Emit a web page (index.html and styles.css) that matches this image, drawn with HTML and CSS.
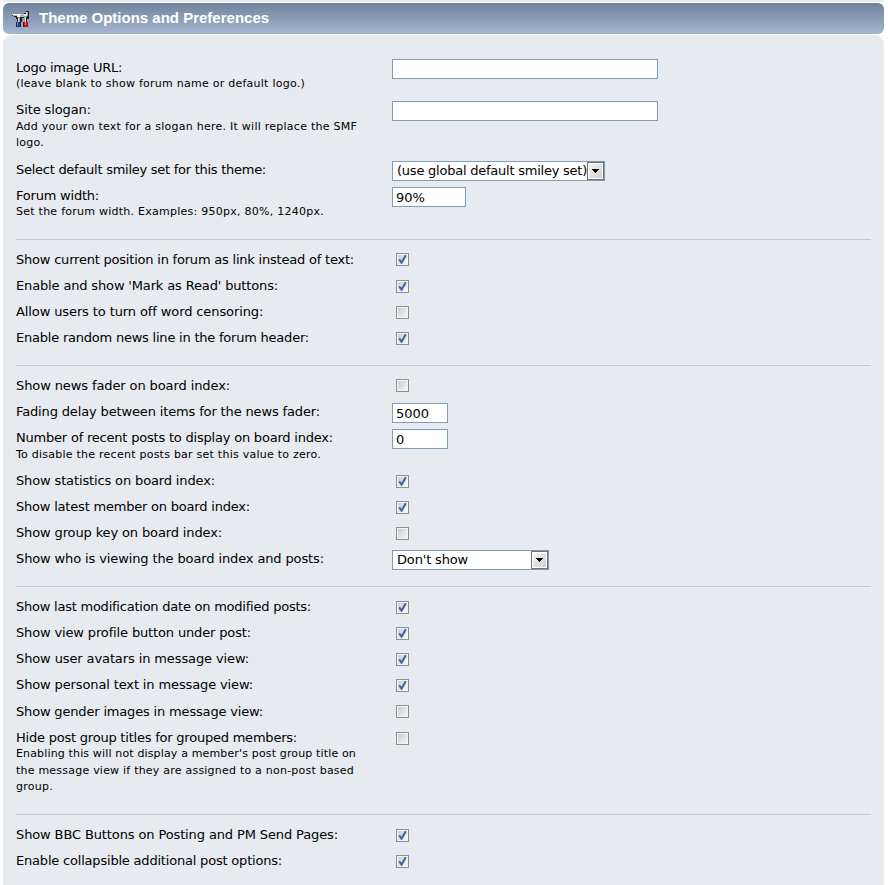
FILE: index.html
```
<!DOCTYPE html>
<html lang="en">
<head>
<meta charset="utf-8">
<title>Theme Options and Preferences</title>
<link rel="stylesheet" href="styles.css">
</head>
<body>
<div class="previous"></div>
<h3 class="titlebar">
<svg class="tools" width="18" height="18" viewBox="0 0 18 18" shape-rendering="crispEdges">
<path fill="#222" d="M0 4h12V3h2V1h3v8h-2v3h1v5h-5v-5h1V8h-2v4h-1v5H4v-5h1V9H4V7H2V6H0z"/>
<path fill="#bbb" d="M1 4h11v3H5V6H1z"/><path fill="#f4f4f4" d="M0 4h9v1H0zM5 5h3v2H5z"/>
<path fill="#999" d="M6 7h2v5H6zM12 5h3v2h-2v5h-1zM14 2h2v4h-2z"/>
<path fill="#e6e6e6" d="M6 8h1v4H6zM12 4h2v2h-2zM13 7h1v5h-1zM14 2h1v4h-1z"/>
<path fill="#123fa8" d="M5 12h3v5H5z"/><path fill="#5e91ed" d="M5 12h1v4H5z"/>
<path fill="#d80815" d="M12 12h4v5h-4z"/><path fill="#ff7777" d="M13 12h1v3h-1z"/>
</svg>
<span>Theme Options and Preferences</span>
</h3>
<form class="panel" id="form"></form>
<script src="script.js"></script>
</body>
</html>
```
FILE: styles.css
```
body { margin: 0; width: 888px; height: 885px; overflow: hidden; background: #fff; color: #000; font: 13px/16.4px Verdana, "DejaVu Sans", sans-serif; }
.previous { height: 2px; margin: 0 4px 1px 3px; background: #e7eaef; border-radius: 0 0 5px 5px; }
.titlebar { box-sizing: border-box; display: flex; align-items: center; gap: 9px; height: 31px; margin: 0 4px 1px 3px; padding: 0 9px; border-radius: 6px; background: linear-gradient(#71839b, #a5b7d0); color: #fff; font: bold 15px/30px Arial, "Liberation Sans", sans-serif; }
.titlebar span { height: 31px; }
.tools { flex: none; }
.panel { box-sizing: border-box; height: 870px; margin: 0 4px 0 3px; padding: 24.7px 13px 0; border-radius: 9px; background: #e7eaef; }
.row { display: grid; grid-template-columns: 376px 1fr; padding-bottom: 9.8px; }
.label { width: 356px; }
.name, .note span { display: block; width: max-content; white-space: nowrap; }
.note { display: block; font-size: 11px; line-height: 16.5px; }
.control { height: 16px; }
.rule { height: 1px; margin: 8.8px 0 11.4px; background: #c8c9cb; }
.text { box-sizing: border-box; display: block; width: 74px; height: 20px; margin: -1.1px 0 0; padding: 1px 4px 0 3px; border: 1px solid #7f9db9; border-radius: 0; background: #fff; color: #000; font: inherit; }
.wide { width: 266px; }
.number { width: 56px; }
.select { box-sizing: border-box; display: flex; justify-content: space-between; height: 20px; margin-top: -1.1px; border: 1px solid #7f9db9; background: #fff; white-space: nowrap; line-height: 17px; padding-left: 4px; }
.smiley { width: 213px; }
.viewing { width: 157px; }
.arrow { box-sizing: border-box; flex: none; display: flex; align-items: center; justify-content: center; width: 17px; height: 18px; border: 1px solid #707070; background: linear-gradient(135deg, #f8f8f8, #ccc); box-shadow: inset 0 0 0 1px #fff; }
.check { display: block; margin: 1.8px 0 0 4px; }
```
FILE: script.js
```
const groups = [
  [
    ['Logo image URL:', 106, 'wide', '', [['(leave blank to show forum name or default logo.)', 289]]],
    ['Site slogan:', 75, 'wide', '', [['Add your own text for a slogan here. It will replace the SMF', 341], ['logo.', 28]]],
    ['Select default smiley set for this theme:', 250, 'smiley', '(use global default smiley set)'],
    ['Forum width:', 83, 'width', '90%', [['Set the forum width. Examples: 950px, 80%, 1240px.', 308]]]
  ],
  [
    ['Show current position in forum as link instead of text:', 338, 'check', true],
    ["Enable and show 'Mark as Read' buttons:", 262, 'check', true],
    ['Allow users to turn off word censoring:', 247, 'check', false],
    ['Enable random news line in the forum header:', 293, 'check', true]
  ],
  [
    ['Show news fader on board index:', 214, 'check', false],
    ['Fading delay between items for the news fader:', 304, 'number', '5000'],
    ['Number of recent posts to display on board index:', 317, 'number', '0', [['To disable the recent posts bar set this value to zero.', 305]]],
    ['Show statistics on board index:', 199, 'check', true],
    ['Show latest member on board index:', 234, 'check', true],
    ['Show group key on board index:', 206, 'check', false],
    ['Show who is viewing the board index and posts:', 308, 'viewing', "Don't show"]
  ],
  [
    ['Show last modification date on modified posts:', 295, 'check', true],
    ['Show view profile button under post:', 235, 'check', true],
    ['Show user avatars in message view:', 233, 'check', true],
    ['Show personal text in message view:', 237, 'check', true],
    ['Show gender images in message view:', 247, 'check', false],
    ['Hide post group titles for grouped members:', 281, 'check', false, [['Enabling this will not display a member\'s post group title on', 340], ['the message view if they are assigned to a non-post based', 338], ['group.', 37]]]
  ],
  [
    ['Show BBC Buttons on Posting and PM Send Pages:', 322, 'check', true],
    ['Enable collapsible additional post options:', 266, 'check', true]
  ]
];

function fit(el, width) {
  el.style.letterSpacing = (width - el.getBoundingClientRect().width) / el.textContent.length + 'px';
}

function add(parent, tag, cls, text) {
  const el = document.createElement(tag);
  el.className = cls;
  if (text) el.textContent = text;
  parent.append(el);
  return el;
}

function checkbox(on) {
  return `<svg class="check" width="13" height="13" viewBox="0 0 13 13">
<defs><linearGradient id="face" x1="0" y1="0" x2="1" y2="1"><stop stop-color="#c9cdd4"/><stop offset="1" stop-color="#f6f6f6"/></linearGradient></defs>
<path fill="#8e8f8f" d="M0 0h13v13H0z"/><path fill="#f4f4f4" d="M1 1h11v11H1z"/><path fill="url(#face)" d="M2 2h9v9H2z"/>
${on ? '<path fill="none" stroke="#4561a5" stroke-width="2" d="M3.2 6.3L5.6 9.6L9.8 2.3"/>' : ''}</svg>`;
}

const form = document.getElementById('form');
groups.forEach((rows, i) => {
  if (i) add(form, 'div', 'rule');
  rows.forEach(([name, width, kind, value, notes]) => {
    const row = add(form, 'div', 'row');
    const label = add(row, 'div', 'label');
    fit(add(label, 'span', 'name', name), width);
    if (notes) {
      const note = add(label, 'span', 'note');
      notes.forEach(([text, w]) => fit(add(note, 'span', '', text), w));
    }
    const control = add(row, 'div', 'control');
    if (kind === 'check') {
      control.innerHTML = checkbox(value);
    } else if (kind === 'smiley' || kind === 'viewing') {
      const select = add(control, 'div', 'select ' + kind);
      const text = add(select, 'span', '', value);
      fit(text, kind === 'smiley' ? 190 : 71);
      add(select, 'span', 'arrow').innerHTML = '<svg width="7" height="4" viewBox="0 0 7 4" shape-rendering="crispEdges"><path d="M0 0h7v1H6v1H5v1H4v1H3V3H2V2H1V1H0z"/></svg>';
    } else {
      add(control, 'input', 'text ' + kind).value = value;
    }
  });
});
```
